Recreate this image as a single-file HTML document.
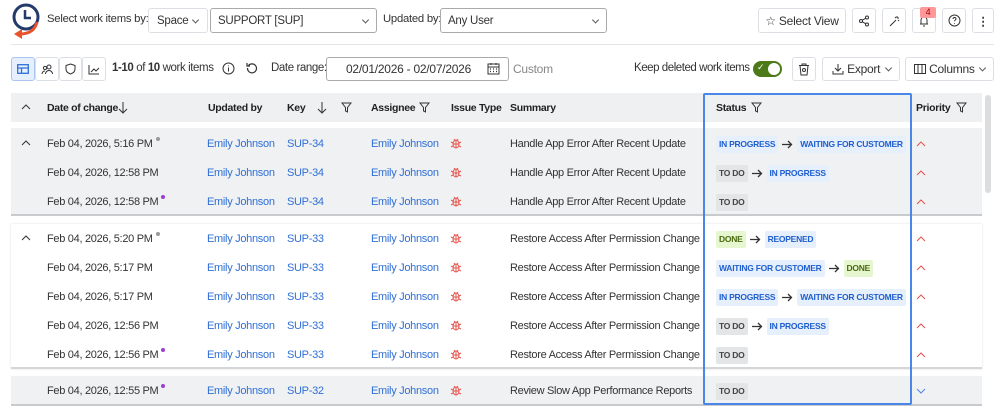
<!DOCTYPE html>
<html><head><meta charset="utf-8"><style>
*{box-sizing:border-box;margin:0;padding:0}
body{width:999px;height:410px;overflow:hidden;background:#fff;font-family:"Liberation Sans",sans-serif;font-size:11.5px;letter-spacing:-0.25px;color:#333;position:relative}
.a{position:absolute}
.btn{position:absolute;border:1px solid #dcdfe4;border-radius:3px;background:#fff;display:flex;align-items:center;justify-content:center;color:#333}
.sel{position:absolute;border:1px solid #aaa;border-radius:3px;background:#fff;display:flex;align-items:center;padding-left:7px;color:#333}
.chev{position:absolute;right:8px;top:50%;width:5px;height:5px;border-right:1px solid #555;border-bottom:1px solid #555;transform:translateY(-70%) rotate(45deg)}
.th{position:absolute;top:102px;font-weight:bold;font-size:10.5px;color:#222;letter-spacing:-0.3px}
.row{position:absolute;left:0;width:999px;height:29px;font-size:11px;letter-spacing:-0.3px}
.c{position:absolute;top:9px;white-space:nowrap}
.lk{color:#2f6fd6}
.tag{display:inline-block;font-size:8.5px;letter-spacing:-0.25px;font-weight:bold;padding:3px 3px;border-radius:2px;line-height:11px;vertical-align:middle}
.tb{background:#e6effc;color:#1f5fcf}
.tg{background:#e4e5e7;color:#444}
.tgr{background:#e6f7d0;color:#4a6a10}
.ar{display:inline-block;margin:0 4px;vertical-align:middle}
.dot{display:inline-block;width:4px;height:4px;border-radius:50%;position:relative;top:-6px;margin-left:3px}
</style></head><body>
<svg class="a" style="left:10px;top:2px" width="32" height="38" viewBox="0 0 32 38"><circle cx="16" cy="15" r="12" fill="none" stroke="#233a6b" stroke-width="3"/><path d="M15 8v8h6" fill="none" stroke="#233a6b" stroke-width="2.5"/><path d="M27 20 Q24 32 10 32" fill="none" stroke="#e8532c" stroke-width="3"/><path d="M4 32 L12 27 L12 37Z" fill="#e8532c"/></svg>
<div class="a" style="left:47px;top:13px;font-size:11.3px">Select work items by:</div>
<div class="btn" style="left:148px;top:8px;width:60px;height:25px;justify-content:flex-start;padding-left:8px">Space<span class="chev" style="right:9px"></span></div>
<div class="sel" style="left:210px;top:8px;width:167px;height:25px">SUPPORT [SUP]<span class="chev"></span></div>
<div class="a" style="left:383px;top:13px;font-size:11.3px">Updated by:</div>
<div class="sel" style="left:440px;top:8px;width:167px;height:25px">Any User<span class="chev"></span></div>
<div class="btn" style="left:758px;top:8px;width:88px;height:25px;font-size:12px">☆&nbsp;Select View</div>
<div class="btn" style="left:852px;top:8px;width:24px;height:25px"><svg width="12" height="12" viewBox="0 0 12 12" fill="none" stroke="#333"><circle cx="9" cy="2.5" r="1.5"/><circle cx="3" cy="6" r="1.5"/><circle cx="9" cy="9.5" r="1.5"/><path d="M4.3 5.2 7.7 3.3M4.3 6.8l3.4 1.9"/></svg></div>
<div class="btn" style="left:882px;top:8px;width:24px;height:25px"><svg width="12" height="12" viewBox="0 0 12 12" fill="none" stroke="#333"><path d="M2 11 8 5M9 1v2M11 3H9M7 2l1 1M10 5l1 1"/></svg></div>
<div class="btn" style="left:912px;top:8px;width:24px;height:25px"><svg width="12" height="12" viewBox="0 0 12 12" fill="none" stroke="#333"><path d="M3 9V5a3 3 0 016 0v4h1H2M5 11h2"/></svg></div>
<div class="a" style="left:920px;top:7px;width:16px;height:11px;background:#f99;color:#a00;font-size:9px;text-align:center;border-radius:2px;line-height:11px">4</div>
<div class="btn" style="left:942px;top:8px;width:24px;height:25px"><svg width="13" height="13" viewBox="0 0 13 13" fill="none" stroke="#333"><circle cx="6.5" cy="6.5" r="5.5"/><path d="M5 5a1.5 1.5 0 113 0c0 1-1.5 1-1.5 2.3M6.5 9v.8"/></svg></div>
<div class="btn" style="left:972px;top:8px;width:22px;height:25px;font-weight:bold">⋮</div>
<div class="a" style="left:11px;top:44px;width:983px;height:1px;background:#e2e4e8"></div>
<div class="btn" style="left:11px;top:57px;width:24px;height:24px;background:#e6effc;border-color:#aac6f0"><svg width="12" height="10" viewBox="0 0 12 10" fill="none" stroke="#2f6fd6" stroke-width="1.3"><rect x=".7" y=".7" width="10.6" height="8.6"/><path d="M.7 4h10.6M4.5 4v5.3"/></svg></div>
<div class="btn" style="left:35px;top:57px;width:24px;height:24px"><svg width="13" height="11" viewBox="0 0 13 11" fill="none" stroke="#333"><circle cx="8" cy="3" r="2"/><circle cx="4" cy="4" r="1.6"/><path d="M4.5 10a3.5 3.5 0 017 0M1 10a3 3 0 013-3"/></svg></div>
<div class="btn" style="left:59px;top:57px;width:23px;height:24px"><svg width="11" height="12" viewBox="0 0 11 12" fill="none" stroke="#333"><path d="M5.5 1 10 2.5V6c0 2.5-2 4.2-4.5 5C3 10.2 1 8.5 1 6V2.5Z"/></svg></div>
<div class="btn" style="left:82px;top:57px;width:24px;height:24px"><svg width="12" height="11" viewBox="0 0 12 11" fill="none" stroke="#333"><path d="M1 1v9h10M3 8l3-3 2 2 3-3"/></svg></div>
<div class="a" style="left:112px;top:62px;font-size:11.5px;letter-spacing:-0.4px"><b>1-10</b> of <b>10</b> work items</div>
<svg class="a" style="left:222px;top:62px" width="13" height="13" viewBox="0 0 13 13" fill="none" stroke="#333"><circle cx="6.5" cy="6.5" r="5.5"/><path d="M6.5 5.5v4M6.5 3.5v.8"/></svg>
<svg class="a" style="left:246px;top:62px" width="12" height="12" viewBox="0 0 12 12" fill="none" stroke="#333" stroke-width="1.2"><path d="M2.5 3.5A4.5 4.5 0 111.5 6"/><path d="M1 1v3h3"/></svg>
<div class="a" style="left:271px;top:62px;font-size:11.5px;letter-spacing:-0.4px">Date range:</div>
<div class="sel" style="left:326px;top:57px;width:183px;height:24px;justify-content:center;padding-left:0;padding-right:18px;font-size:12px">02/01/2026 - 02/07/2026</div>
<svg class="a" style="left:487px;top:62px" width="13" height="13" viewBox="0 0 13 13" fill="none" stroke="#333"><rect x="1" y="2" width="11" height="10"/><path d="M1 5h11M4 1v2M9 1v2"/><path d="M3 7h1M6 7h1M9 7h1M3 9.5h1M6 9.5h1M9 9.5h1" stroke-width="1.2"/></svg>
<div class="a" style="left:513px;top:62px;color:#888;font-size:12px">Custom</div>
<div class="a" style="left:634px;top:62px;font-size:11.5px;letter-spacing:-0.45px">Keep deleted work items</div>
<div class="a" style="left:753px;top:61px;width:29px;height:16px;border-radius:8px;background:#4d7a18"><div class="a" style="left:15px;top:2px;width:12px;height:12px;border-radius:50%;background:#fff"></div><div class="a" style="left:4px;top:1px;color:#fff;font-size:9px">✓</div></div>
<div class="btn" style="left:792px;top:57px;width:24px;height:24px"><svg width="12" height="13" viewBox="0 0 12 13" fill="none" stroke="#333"><path d="M1 2.5h10M4 2.5V1h4v1.5M2 2.5l1 9.5h6l1-9.5"/><circle cx="6" cy="7" r="1.5"/></svg></div>
<div class="btn" style="left:822px;top:57px;width:78px;height:24px;justify-content:flex-start;padding-left:9px;font-size:12px"><svg width="12" height="12" viewBox="0 0 12 12" fill="none" stroke="#333"><path d="M6 1v7M3 5l3 3 3-3M1 8v3h10V8"/></svg>&nbsp;Export<span class="chev"></span></div>
<div class="btn" style="left:905px;top:57px;width:89px;height:24px;justify-content:flex-start;padding-left:8px;font-size:12px"><svg width="12" height="10" viewBox="0 0 12 10" fill="none" stroke="#333"><rect x=".5" y=".5" width="11" height="9"/><path d="M4 .5v9M8 .5v9"/></svg>&nbsp;Columns<span class="chev"></span></div>
<div class="a" style="left:11px;top:93px;width:971px;height:29px;background:#eef0f2"></div>
<svg class="a" style="left:21px;top:104px" width="10" height="6" viewBox="0 0 10 6" fill="none" stroke="#333"><path d="M1 5l4-4 4 4"/></svg>
<div class="th" style="left:47px">Date of change</div>
<svg class="a" style="left:118px;top:101px" width="10" height="13" fill="none" stroke="#333"><path d="M5 1v11M1 8l4 4 4-4"/></svg>
<div class="th" style="left:208px">Updated by</div>
<div class="th" style="left:287px">Key</div>
<svg class="a" style="left:317px;top:101px" width="10" height="13" fill="none" stroke="#333"><path d="M5 1v11M1 8l4 4 4-4"/></svg>
<div class="th" style="left:371px">Assignee</div>
<div class="th" style="left:451px">Issue Type</div>
<div class="th" style="left:510px">Summary</div>
<div class="th" style="left:716px">Status</div>
<div class="th" style="left:916px">Priority</div>
<svg width="0" height="0"><defs><g id="fl"><path d="M1 1h9L6.5 5.5V10L4.5 9V5.5Z" fill="none" stroke="#333"/></g><g id="bug" fill="none" stroke="#e5534b"><ellipse cx="6" cy="7" rx="3" ry="4"/><path d="M6 3v8M3 7h6M1 5l2 1M11 5 9 6M1 10l2-1M11 10 9 9M4 2l1 1.3M8 2 7 3.3"/></g></defs></svg>
<svg class="a" style="left:341px;top:102px" width="11" height="11"><use href="#fl"/></svg>
<svg class="a" style="left:419px;top:102px" width="11" height="11"><use href="#fl"/></svg>
<svg class="a" style="left:751px;top:102px" width="11" height="11"><use href="#fl"/></svg>
<svg class="a" style="left:956px;top:102px" width="11" height="11"><use href="#fl"/></svg>
<div class="a" style="left:985px;top:95px;width:6px;height:98px;background:#ddd;border-radius:3px"></div>
<div class="a" style="left:11px;top:128px;width:971px;height:88px;background:#f0f1f3;border-bottom:2px solid #c8cacd"></div>
<div class="a" style="left:11px;top:224px;width:971px;height:145px;background:#fff;border-bottom:2px solid #d4d6d9;box-shadow:0 0 2px #ddd"></div>
<div class="a" style="left:11px;top:376px;width:971px;height:30px;background:#f0f1f3;border-bottom:2px solid #c8cacd"></div>
<div id="rows"></div>
<div class="a" style="left:703px;top:93px;width:209px;height:312px;border:2px solid #4a86e8;border-radius:2px"></div>
<script>
const S=(c,t)=>`<span class="tag ${c}">${t}</span>`,A='<svg class="ar" width="11" height="9" viewBox="0 0 11 9" fill="none" stroke="#333" stroke-width="1.3"><path d="M0 4.5h10M6 1l3.5 3.5L6 8"/></svg>';
const IP=S('tb','IN PROGRESS'),WC=S('tb','WAITING FOR CUSTOMER'),TD=S('tg','TO DO'),DN=S('tgr','DONE'),RO=S('tb','REOPENED');
const R=[
[143,1,'Feb 04, 2026, 5:16 PM','#999','SUP-34','Handle App Error After Recent Update',IP+A+WC,1],
[172,0,'Feb 04, 2026, 12:58 PM','','SUP-34','Handle App Error After Recent Update',TD+A+IP,1],
[201,0,'Feb 04, 2026, 12:58 PM','#9b3fd0','SUP-34','Handle App Error After Recent Update',TD,1],
[238,1,'Feb 04, 2026, 5:20 PM','#999','SUP-33','Restore Access After Permission Change',DN+A+RO,1],
[267,0,'Feb 04, 2026, 5:17 PM','','SUP-33','Restore Access After Permission Change',WC+A+DN,1],
[296,0,'Feb 04, 2026, 5:17 PM','','SUP-33','Restore Access After Permission Change',IP+A+WC,1],
[325,0,'Feb 04, 2026, 12:56 PM','','SUP-33','Restore Access After Permission Change',TD+A+IP,1],
[354,0,'Feb 04, 2026, 12:56 PM','#9b3fd0','SUP-33','Restore Access After Permission Change',TD,1],
[390,0,'Feb 04, 2026, 12:55 PM','#9b3fd0','SUP-32','Review Slow App Performance Reports',TD,0]];
let h='';
for(const r of R){const y=r[0]-14;
h+=`<div class="row" style="top:${y}px">`+(r[1]?`<svg class="c" style="left:21px;top:11px" width="10" height="6"><path d="M1 5l4-4 4 4" fill="none" stroke="#333"/></svg>`:'')+
`<div class="c" style="left:47px">${r[2]}${r[3]?`<i class="dot" style="background:${r[3]}"></i>`:''}</div>
<div class="c lk" style="left:207px">Emily Johnson</div><div class="c lk" style="left:287px">${r[4]}</div>
<div class="c lk" style="left:371px">Emily Johnson</div><svg class="c" style="left:450px;top:8px" width="12" height="13"><use href="#bug"/></svg>
<div class="c" style="left:510px">${r[5]}</div><div class="c" style="left:716px;top:7px;line-height:15px">${r[6]}</div>
<svg class="c" style="left:916px;top:12px" width="10" height="6"><path d="${r[7]?'M1 5l4-4 4 4':'M1 1l4 4 4-4'}" fill="none" stroke="${r[7]?'#e5534b':'#4a86e8'}"/></svg></div>`;}
document.getElementById('rows').outerHTML=h;
</script>
</body></html>
